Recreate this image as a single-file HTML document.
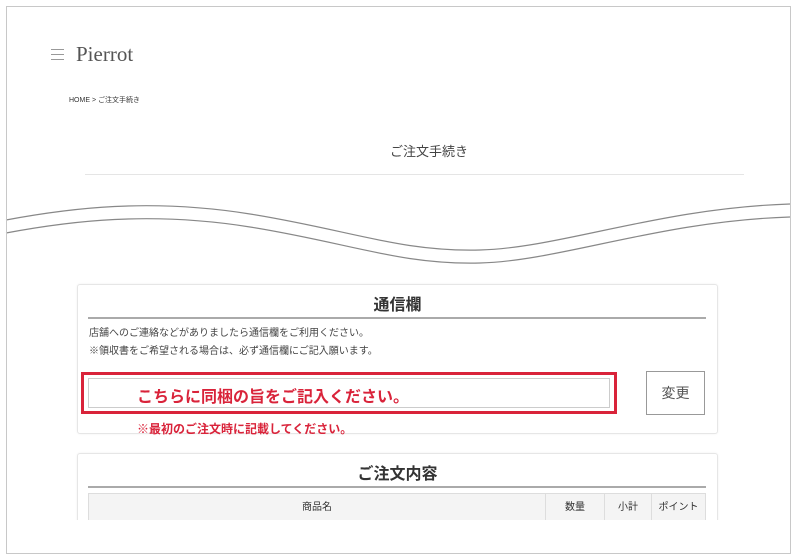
<!DOCTYPE html>
<html><head><meta charset="utf-8"><style>
*{margin:0;padding:0;box-sizing:border-box}
html,body{width:799px;height:560px}
body{background:#fff;position:relative;overflow:hidden;font-family:"Liberation Sans","Noto Sans CJK JP",sans-serif;color:#333}
.a{position:absolute}
.frame{left:6px;top:6px;width:785px;height:548px;border:1px solid #c8c8c8}
.box{border:1px solid #e6e6e6;border-radius:3px;box-shadow:0 0 2px rgba(0,0,0,.06);background:#fff}
</style></head><body>
<div class="a" style="left:51px;top:49px;width:13px">
<div style="height:1px;background:#999;margin-bottom:4px"></div><div style="height:1px;background:#999;margin-bottom:4px"></div><div style="height:1px;background:#999"></div></div>
<div class="a" style="left:76px;top:42px;font-family:'Liberation Serif',serif;font-size:21px;color:#555">Pierrot</div>
<div class="a" style="left:69px;top:95px;font-size:7px;color:#333">HOME &gt; ご注文手続き</div>
<div class="a" style="left:390px;top:141px;font-size:13px;color:#444">ご注文手続き</div>
<div class="a" style="left:85px;top:174px;width:659px;height:1px;background:#e5e5e5"></div>
<svg class="a" style="left:0;top:0" width="799" height="300">
<path d="M6,220 C70,208 150,198 250,214 S 400,252 480,250 S 660,208 790,204" fill="none" stroke="#888" stroke-width="1.2"/>
<path d="M6,233 C70,221 150,211 250,227 S 400,265 480,263 S 660,221 790,217" fill="none" stroke="#888" stroke-width="1.2"/>
</svg>
<div class="a box" style="left:77px;top:284px;width:641px;height:150px"></div>
<div class="a" style="left:77px;top:291px;width:641px;text-align:center;font-size:16px;font-weight:bold;color:#333">通信欄</div>
<div class="a" style="left:88px;top:317px;width:618px;height:2px;background:#aaa"></div>
<div class="a" style="left:89px;top:325px;font-size:10px;color:#444;line-height:18px">店舗へのご連絡などがありましたら通信欄をご利用ください。<br>※領収書をご希望される場合は、必ず通信欄にご記入願います。</div>
<div class="a" style="left:81px;top:372px;width:536px;height:42px;border:3px solid #d9233a"></div>
<div class="a" style="left:88px;top:378px;width:522px;height:30px;border:1px solid #ccc"></div>
<div class="a" style="left:137px;top:383px;font-size:16px;font-weight:bold;color:#d9233a">こちらに同梱の旨をご記入ください。</div>
<div class="a" style="left:646px;top:371px;width:59px;height:44px;border:1px solid #999;text-align:center;line-height:42px;font-size:14px;color:#555">変更</div>
<div class="a" style="left:137px;top:420px;font-size:12px;font-weight:bold;color:#d9233a">※最初のご注文時に記載してください。</div>
<div class="a box" style="left:77px;top:453px;width:641px;height:80px"></div>
<div class="a" style="left:77px;top:460px;width:641px;text-align:center;font-size:16px;font-weight:bold;color:#333">ご注文内容</div>
<div class="a" style="left:88px;top:486px;width:618px;height:2px;background:#aaa"></div>
<div class="a" style="left:88px;top:493px;width:618px;height:30px;background:#f4f4f4;border:1px solid #ddd;font-size:10px;color:#333;display:flex;line-height:28px;text-align:center">
<div style="width:457px;border-right:1px solid #ddd">商品名</div>
<div style="width:59px;border-right:1px solid #ddd">数量</div>
<div style="width:47px;border-right:1px solid #ddd">小計</div>
<div style="flex:1">ポイント</div></div>
<div class="a" style="left:0;top:520px;width:799px;height:40px;background:#fff"></div>
<div class="a frame"></div>
</body></html>
